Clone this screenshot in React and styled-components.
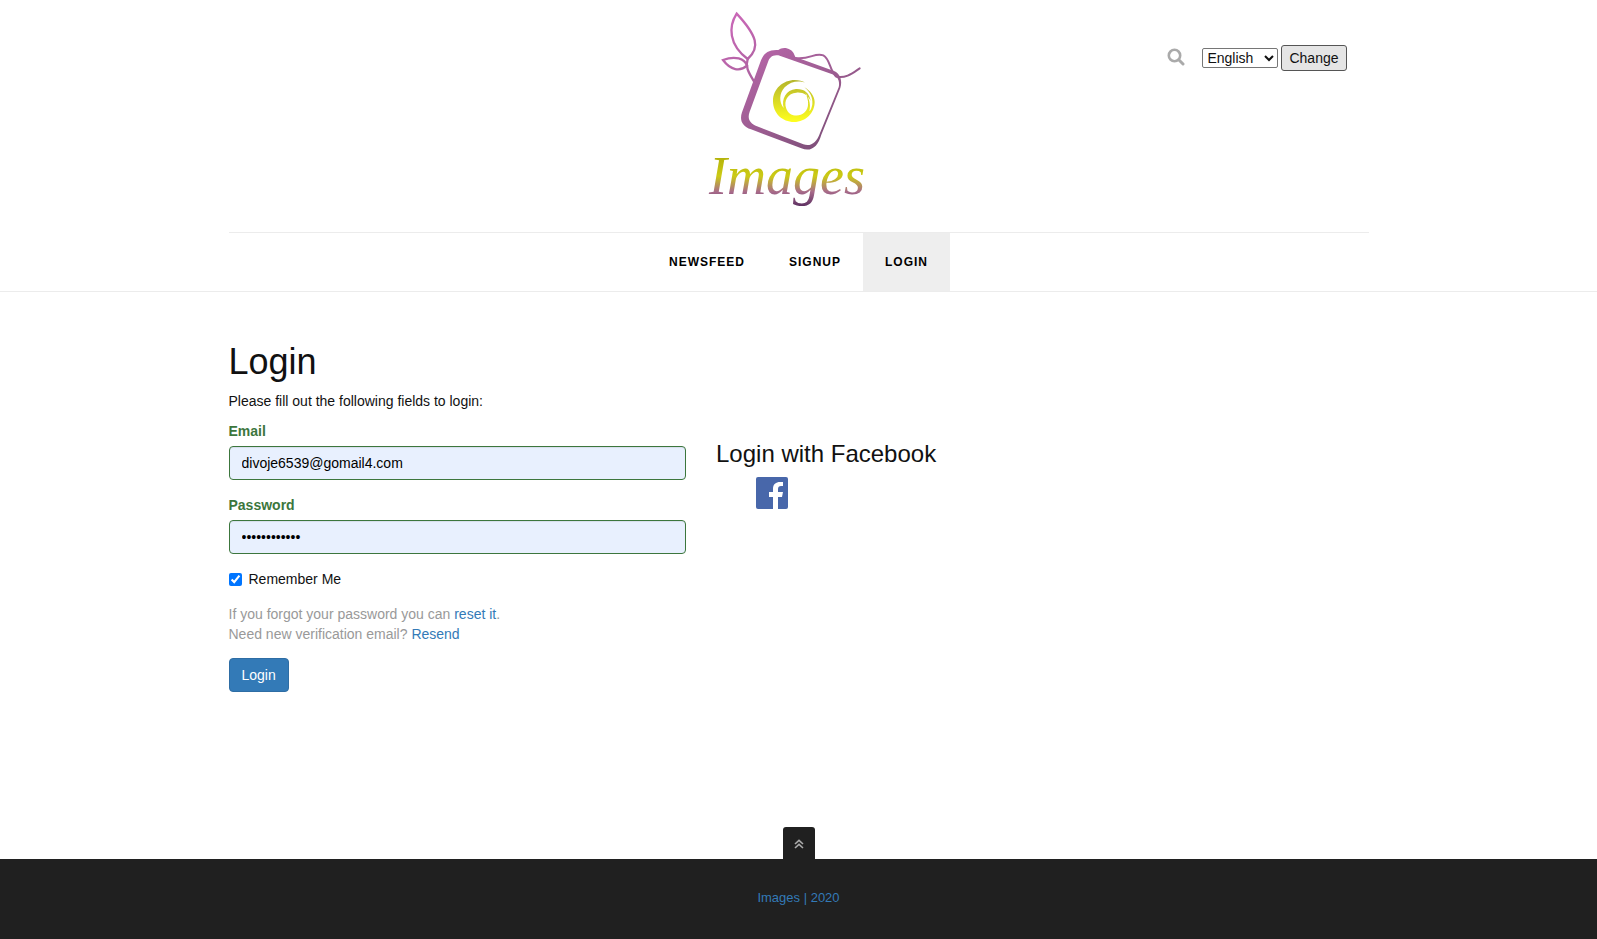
import React from 'react';
import styled, { createGlobalStyle, css } from 'styled-components';

const GlobalStyle = createGlobalStyle`
  *, *::before, *::after { box-sizing: border-box; }
  body {
    margin: 0;
    background: #fff;
    color: #111;
    font: 14px/20px "Liberation Sans", Arial, sans-serif;
  }
`;

const Page = styled.div`
  display: flex;
  flex-direction: column;
  min-height: 100vh;
`;

const Container = styled.div`
  width: 100%;
  max-width: 1170px;
  margin: 0 auto;
  padding: 0 15px;
`;

const Header = styled.header`
  border-bottom: 1px solid #ececec;
`;

const Masthead = styled.div`
  display: grid;
  grid-template-columns: 1fr auto 1fr;
`;

const LogoLink = styled.a`
  grid-column: 2;
  display: block;
  svg { display: block; }
`;

const LogoWord = styled.text`
  font: italic 54px "Liberation Serif", "Times New Roman", serif;
`;

const Tools = styled.div`
  display: flex;
  align-items: center;
  justify-content: flex-end;
  align-self: start;
  padding: 45px 22px 0 0;
`;

const SearchButton = styled.button`
  display: flex;
  margin-right: 17px;
  padding: 0 0 2px;
  border: 0;
  background: none;
  color: #aaa;
`;

const LanguageForm = styled.form`
  display: flex;
  align-items: center;
  gap: 3px;
`;

const LanguageSelect = styled.select`
  width: 76px;
  height: 20px;
  padding: 0;
  border: 1px solid #767676;
  border-radius: 2px;
  background: #fff;
  color: #111;
  font: inherit;
`;

const ChangeButton = styled.button`
  height: 26px;
  padding: 0 7px;
  border: 1px solid #555;
  border-radius: 3px;
  background: #e5e5e5;
  color: #111;
  font: inherit;
`;

const Nav = styled.nav`
  display: flex;
  justify-content: center;
  border-top: 1px solid #ececec;
`;

const NavLink = styled.a`
  padding: 0 22px;
  color: #000;
  font-size: 12px;
  font-weight: bold;
  line-height: 58px;
  letter-spacing: 1px;
  text-decoration: none;
  text-transform: uppercase;
  ${({ $active }) => $active && css`background: #eee;`}
`;

const Main = styled.main`
  flex: 1;
  padding: 49px 0 60px;
`;

const Title = styled.h1`
  margin: 0 0 8px;
  font-size: 36px;
  font-weight: normal;
  line-height: 42px;
`;

const Intro = styled.p`
  margin: 0 0 10px;
`;

const Columns = styled.div`
  display: grid;
  grid-template-columns: 5fr 7fr;
  margin: 0 -15px;
`;

const Column = styled.div`
  padding: 0 15px;
`;

const Field = styled.div`
  margin-bottom: 15px;
`;

const FieldLabel = styled.label`
  display: block;
  margin-bottom: 5px;
  color: #3c763d;
  font-weight: bold;
`;

const TextInput = styled.input`
  display: block;
  width: 100%;
  height: 34px;
  padding: 6px 12px;
  border: 1px solid #3c763d;
  border-radius: 4px;
  background: #e8f0fe;
  box-shadow: inset 0 1px 1px rgba(0, 0, 0, 0.075);
  color: #000;
  font: inherit;
`;

const CheckLabel = styled.label`
  display: flex;
  align-items: center;
  gap: 7px;
  margin-bottom: 15px;
`;

const Checkbox = styled.input`
  width: 13px;
  height: 13px;
  margin: 0;
  accent-color: #0075ff;
`;

const Help = styled.p`
  margin: 0 0 14px;
  color: #999;
`;

const TextLink = styled.a`
  color: #337ab7;
  text-decoration: none;
`;

const SubmitButton = styled.button`
  height: 34px;
  padding: 0 12px;
  border: 1px solid #2e6da4;
  border-radius: 4px;
  background: #337ab7;
  color: #fff;
  font: inherit;
`;

const SocialTitle = styled.h3`
  margin: 20px 0 10px;
  font-size: 24px;
  font-weight: normal;
  line-height: 26px;
`;

const SocialList = styled.ul`
  margin: 0;
  padding: 0 0 0 40px;
  list-style: none;
  a, svg { display: block; width: 32px; height: 32px; }
`;

const TopLink = styled.a`
  display: flex;
  align-items: center;
  justify-content: center;
  align-self: center;
  width: 32px;
  height: 32px;
  padding-top: 2px;
  border-radius: 3px 3px 0 0;
  background: #202020;
  color: #aaa;
`;

const Footer = styled.footer`
  padding: 29px 15px 31px;
  background: #202020;
  text-align: center;
  font-size: 13px;
`;

const Logo = () => (
  <svg width="320" height="232" viewBox="639 0 320 232" role="img" aria-label="Images">
    <defs>
      <linearGradient id="plum" x1="130" y1="60" x2="400" y2="420" gradientUnits="userSpaceOnUse">
        <stop offset="0" stopColor="#c867b6" />
        <stop offset="0.4" stopColor="#ac629f" />
        <stop offset="0.7" stopColor="#9b5c90" />
        <stop offset="1" stopColor="#80507b" />
      </linearGradient>
      <linearGradient id="lens" x1="0" y1="238" x2="0" y2="366" gradientUnits="userSpaceOnUse">
        <stop offset="0" stopColor="#b3b42c" />
        <stop offset="1" stopColor="#ffff1f" />
      </linearGradient>
      <linearGradient id="word" x1="0" y1="150" x2="0" y2="208" gradientUnits="userSpaceOnUse">
        <stop offset="0" stopColor="#aaa908" />
        <stop offset="0.45" stopColor="#cccb14" />
        <stop offset="0.72" stopColor="#a86b8b" />
        <stop offset="1" stopColor="#53285c" />
      </linearGradient>
    </defs>
    <g transform="translate(690 0) scale(0.33333)">
      <g fill="none" stroke="url(#plum)" strokeWidth="7" strokeLinecap="round">
        <path d="M140 41C115 80 116 134 173 177C212 143 201 107 140 41Z" />
        <path d="M99 180C136 166 164 176 171 197C150 216 122 211 99 180Z" />
        <path d="M173 177C166 199 173 213 192 244" />
        <path d="M315 174C361 180 372 157 400 166C421 177 418 211 439 230C469 236 488 219 509 205" strokeWidth="6" />
      </g>
      <path
        fill="url(#plum)"
        fillRule="evenodd"
        d="M156 337L213 181C222 158 237 148 265 150C277 139 305 142 313 164L316 171L430 212C450 219 458 240 451 264L394 404C384 439 364 457 334 445L183 388C156 378 148 360 156 337Z
           M179 335L234 186C238 172 248 163 265 166L427 223C444 229 450 245 446 262L390 399C380 428 362 441 340 433L201 379C180 371 171 357 179 335Z"
      />
      <path
        fill="url(#lens)"
        fillRule="evenodd"
        d="M349 249C303 224 249 254 249 303C249 340 277 366 312 366C348 366 374 338 374 306C374 289 361 272 343 262C361 276 369 293 367 313C364 328 361 331 358 334C364 310 355 291 346 278C357 301 358 323 344 337C326 354 297 348 289 326C280 301 294 280 319 278C340 276 354 286 362 303C358 277 341 266 318 267C288 269 274 297 281 324C267 307 267 280 284 262C303 243 328 241 349 249Z"
      />
    </g>
    <LogoWord x="709" y="194" fill="url(#word)">Images</LogoWord>
  </svg>
);

const SearchIcon = () => (
  <svg width="18" height="18" viewBox="0 0 18 18" fill="none" stroke="currentColor" aria-hidden="true">
    <circle cx="7.5" cy="7.5" r="5.7" strokeWidth="2.6" />
    <path d="M12 12L16 16" strokeWidth="3" strokeLinecap="round" />
  </svg>
);

const FacebookIcon = () => (
  <svg viewBox="0 0 32 32" aria-hidden="true">
    <rect width="32" height="32" rx="2" fill="#4867aa" />
    <path fill="#fff" d="M17 32V20H13V15H17V12C17 7 20 5 24 5H27V9H25C23 9 22 10 22 12V15H27L26 20H22V32Z" />
  </svg>
);

const DoubleUpIcon = () => (
  <svg width="10" height="10" viewBox="0 0 10 10" fill="none" stroke="currentColor" strokeWidth="1.6" aria-hidden="true">
    <path d="M1 5L5 1.4L9 5M1 9L5 5.4L9 9" />
  </svg>
);

export default function App() {
  return (
    <Page id="top">
      <GlobalStyle />
      <Header>
        <Container>
          <Masthead>
            <LogoLink href="#home"><Logo /></LogoLink>
            <Tools>
              <SearchButton type="button" aria-label="Search"><SearchIcon /></SearchButton>
              <LanguageForm onSubmit={(e) => e.preventDefault()}>
                <LanguageSelect aria-label="Language" defaultValue="en">
                  <option value="en">English</option>
                </LanguageSelect>
                <ChangeButton type="submit">Change</ChangeButton>
              </LanguageForm>
            </Tools>
          </Masthead>
          <Nav>
            <NavLink href="#newsfeed">Newsfeed</NavLink>
            <NavLink href="#signup">Signup</NavLink>
            <NavLink href="#login" $active>Login</NavLink>
          </Nav>
        </Container>
      </Header>
      <Main>
        <Container>
          <Title>Login</Title>
          <Intro>Please fill out the following fields to login:</Intro>
          <Columns>
            <Column as="form" onSubmit={(e) => e.preventDefault()}>
              <Field>
                <FieldLabel htmlFor="email">Email</FieldLabel>
                <TextInput id="email" type="text" defaultValue="divoje6539@gomail4.com" />
              </Field>
              <Field>
                <FieldLabel htmlFor="password">Password</FieldLabel>
                <TextInput id="password" type="password" defaultValue="abcdefghijkl" />
              </Field>
              <CheckLabel>
                <Checkbox type="checkbox" defaultChecked />
                Remember Me
              </CheckLabel>
              <Help>
                If you forgot your password you can <TextLink href="#reset">reset it</TextLink>.
                <br />
                Need new verification email? <TextLink href="#resend">Resend</TextLink>
              </Help>
              <SubmitButton type="submit">Login</SubmitButton>
            </Column>
            <Column>
              <SocialTitle>Login with Facebook</SocialTitle>
              <SocialList>
                <li><a href="#facebook" aria-label="Facebook"><FacebookIcon /></a></li>
              </SocialList>
            </Column>
          </Columns>
        </Container>
      </Main>
      <TopLink href="#top" aria-label="Back to top"><DoubleUpIcon /></TopLink>
      <Footer>
        <TextLink href="#home">Images | 2020</TextLink>
      </Footer>
    </Page>
  );
}
